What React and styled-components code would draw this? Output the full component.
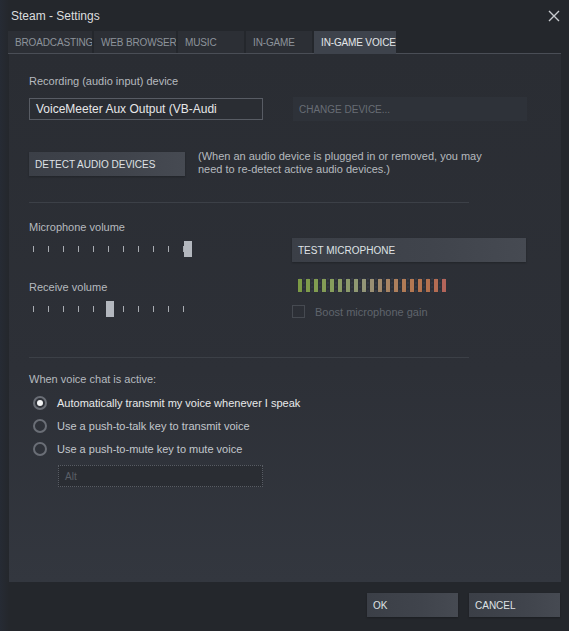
import { createGlobalStyle } from 'styled-components';
import styled from 'styled-components';

const GlobalStyle = createGlobalStyle`
  html, body {
    margin: 0;
    padding: 0;
    background: #23262b;
  }
  body {
    font-family: "Liberation Sans", Arial, sans-serif;
  }
`;

const Window = styled.div`
  width: 569px;
  height: 631px;
  box-sizing: border-box;
  background: linear-gradient(to right, #262b34 0, #24272c 9px, #24272c 100%);
  display: flex;
  flex-direction: column;
  overflow: hidden;
`;

const TitleBar = styled.div`
  height: 31px;
  display: flex;
  align-items: center;
  justify-content: space-between;
  padding: 0 9px 0 11px;
  box-sizing: border-box;
`;

const Title = styled.span`
  color: #dcdedf;
  font-size: 12px;
`;

const Close = styled.svg`
  width: 12px;
  height: 12px;
`;

const TabRow = styled.div`
  display: flex;
  gap: 2px;
  margin: 0 8px 0 8px;
  height: 22px;
  border-bottom: 1px solid #4a4e56;
`;

const Tab = styled.div`
  width: ${p => p.$w}px;
  flex-shrink: 0;
  box-sizing: border-box;
  padding-left: 7px;
  display: flex;
  align-items: center;
  white-space: nowrap;
  overflow: hidden;
  font-size: 10px;
  letter-spacing: -0.15px;
  text-transform: uppercase;
  color: ${p => (p.$active ? '#e4e7ea' : '#8d939b')};
  background: ${p => (p.$active ? '#3e434c' : '#2c2f35')};
  margin-bottom: ${p => (p.$active ? '-1px' : '0')};
  height: ${p => (p.$active ? '23px' : '22px')};
`;

const Panel = styled.div`
  margin: 0 8px 0 9px;
  height: 528px;
  background: linear-gradient(to bottom, #2a2d33 0%, #2d3037 60%, #33373f 100%);
  padding: 20px 0 0 20px;
  box-sizing: border-box;
  display: flex;
  flex-direction: column;
`;

const Label = styled.div`
  color: #b6babf;
  font-size: 11px;
  line-height: 14px;
  margin-top: ${p => p.$mt || 0}px;
`;

const Row = styled.div`
  display: flex;
  align-items: ${p => p.$align || 'center'};
  gap: ${p => p.$gap || 0}px;
  margin-top: ${p => p.$mt || 0}px;
`;

const TextBox = styled.div`
  width: ${p => p.$w}px;
  height: 22px;
  box-sizing: border-box;
  border: 1px ${p => (p.$dotted ? 'dotted' : 'solid')} #585c64;
  background: #2a2d33;
  padding: 0 6px;
  display: flex;
  align-items: center;
  font-size: ${p => (p.$dim ? 10 : 12)}px;
  color: ${p => (p.$dim ? '#5a5f67' : '#e6e7e8')};
  margin-left: ${p => p.$ml || 0}px;
`;

const Button = styled.div`
  width: ${p => p.$w}px;
  height: 24px;
  box-sizing: border-box;
  padding: 0 6px;
  display: flex;
  align-items: center;
  font-size: 10px;
  text-transform: uppercase;
  color: ${p => (p.$disabled ? '#686d75' : '#dfe2e5')};
  background: ${p =>
    p.$disabled
      ? '#2e3239'
      : 'linear-gradient(to right, #3b3f47 0%, #40444c 60%, #464a52 100%)'};
  box-shadow: ${p => (p.$disabled ? 'none' : '0 1px 2px rgba(0,0,0,0.25)')};
`;

const HelpText = styled.div`
  color: #b6babf;
  font-size: 11px;
  line-height: 13px;
  margin-top: -2px;
`;

const Separator = styled.div`
  width: 440px;
  height: 1px;
  background: #3c4047;
  margin-top: ${p => p.$mt}px;
`;

const Columns = styled.div`
  display: flex;
  margin-top: 17px;
`;

const LeftCol = styled.div`
  width: 263px;
  display: flex;
  flex-direction: column;
`;

const RightCol = styled.div`
  display: flex;
  flex-direction: column;
  align-items: flex-start;
  padding-top: 18px;
`;

const Slider = styled.div`
  position: relative;
  display: flex;
  align-items: center;
  height: 16px;
  margin-top: ${p => p.$mt}px;
  padding-left: 3px;
`;

const Tick = styled.div`
  width: 15px;
  display: flex;
  visibility: ${p => (p.$hidden ? 'hidden' : 'visible')};
  &::before {
    content: '';
    width: 1px;
    height: 6px;
    background: #a8acb2;
    margin-left: 1px;
  }
`;

const Thumb = styled.div`
  position: absolute;
  top: 0;
  width: 8px;
  height: 16px;
  background: #b3b7be;
`;

const Meter = styled.div`
  display: flex;
  gap: 4px;
  margin: 15px 0 0 6px;
  padding: 2px 0;
  background-image: radial-gradient(circle, rgba(70, 80, 100, 0.5) 0.6px, transparent 0.8px);
  background-size: 4px 4px;
`;

const Bar = styled.div`
  width: 4px;
  height: 13px;
  background: ${p => p.$c};
`;

const CheckRow = styled.label`
  display: flex;
  align-items: center;
  gap: 10px;
  margin-top: 11px;
  font-size: 11px;
  color: #5f646c;
`;

const CheckBox = styled.span`
  width: 13px;
  height: 13px;
  box-sizing: border-box;
  border: 1px solid #464a51;
`;

const RadioList = styled.div`
  display: flex;
  flex-direction: column;
  gap: 9px;
  margin: 10px 0 0 4px;
`;

const RadioRow = styled.div`
  display: flex;
  align-items: center;
  gap: 10px;
  font-size: 11px;
  color: ${p => (p.$on ? '#e8e9ea' : '#c3c7cc')};
`;

const Radio = styled.span`
  width: 14px;
  height: 14px;
  box-sizing: border-box;
  border-radius: 50%;
  border: 2px solid #6a6e76;
  display: flex;
  align-items: center;
  justify-content: center;
  &::after {
    content: '';
    display: ${p => (p.$on ? 'block' : 'none')};
    width: 6px;
    height: 6px;
    border-radius: 50%;
    background: #f2f3f4;
  }
`;

const Footer = styled.div`
  flex: 1;
  display: flex;
  justify-content: flex-end;
  align-items: flex-start;
  gap: 11px;
  padding: 11px 9px 0 0;
`;

const meterColors = [
  '#7c9a45', '#7f9b4b', '#819c50', '#849c56', '#879d5c', '#8a9b63', '#8c9a6a',
  '#8f9871', '#939577', '#9a8f73', '#a1896b', '#a88463', '#ad7f5c', '#b17b56',
  '#b37852', '#b3744f', '#b3714e', '#b36c52', '#b3655a',
];

// value: 0..1, thumb travels from tick 0 to just past the last tick
function VolumeSlider({ value, mt }) {
  const left = 3 + Math.round(value * 152);
  const hiddenTick = value < 1 ? Math.round((left - 3) / 15) : -1;
  return (
    <Slider $mt={mt}>
      {Array.from({ length: 11 }, (_, i) => (
        <Tick key={i} $hidden={i === hiddenTick} />
      ))}
      <Thumb style={{ left }} />
    </Slider>
  );
}

export default function App() {
  const tabs = [
    ['Broadcasting', 84],
    ['Web Browser', 82],
    ['Music', 66],
    ['In-Game', 66],
    ['In-Game Voice', 82, true],
  ];
  return (
    <Window>
      <GlobalStyle />
      <TitleBar>
        <Title>Steam - Settings</Title>
        <Close viewBox="0 0 12 12">
          <path d="M1 1L11 11M11 1L1 11" stroke="#c8cbcf" strokeWidth="1.4" />
        </Close>
      </TitleBar>
      <TabRow>
        {tabs.map(([t, w, a]) => (
          <Tab key={t} $w={w} $active={a}>{t}</Tab>
        ))}
      </TabRow>
      <Panel>
        <Label>Recording (audio input) device</Label>
        <Row $mt={9} $gap={30}>
          <TextBox $w={234}>VoiceMeeter Aux Output (VB-Audi</TextBox>
          <Button $w={234} $disabled>Change device...</Button>
        </Row>
        <Row $mt={31} $gap={13} $align="flex-start">
          <Button $w={156}>Detect audio devices</Button>
          <HelpText>
            (When an audio device is plugged in or removed, you may
            <br />
            need to re-detect active audio devices.)
          </HelpText>
        </Row>
        <Separator $mt={26} />
        <Columns>
          <LeftCol>
            <Label>Microphone volume</Label>
            <VolumeSlider value={1} mt={7} />
            <Label $mt={23}>Receive volume</Label>
            <VolumeSlider value={0.487} mt={7} />
          </LeftCol>
          <RightCol>
            <Button $w={234}>Test microphone</Button>
            <Meter>
              {meterColors.map((c, i) => (
                <Bar key={i} $c={c} />
              ))}
            </Meter>
            <CheckRow>
              <CheckBox />
              Boost microphone gain
            </CheckRow>
          </RightCol>
        </Columns>
        <Separator $mt={39} />
        <Label $mt={14}>When voice chat is active:</Label>
        <RadioList>
          <RadioRow $on>
            <Radio $on />
            Automatically transmit my voice whenever I speak
          </RadioRow>
          <RadioRow>
            <Radio />
            Use a push-to-talk key to transmit voice
          </RadioRow>
          <RadioRow>
            <Radio />
            Use a push-to-mute key to mute voice
          </RadioRow>
        </RadioList>
        <Row $mt={9}>
          <TextBox $w={205} $ml={29} $dotted $dim>Alt</TextBox>
        </Row>
      </Panel>
      <Footer>
        <Button $w={91}>OK</Button>
        <Button $w={91}>Cancel</Button>
      </Footer>
    </Window>
  );
}
